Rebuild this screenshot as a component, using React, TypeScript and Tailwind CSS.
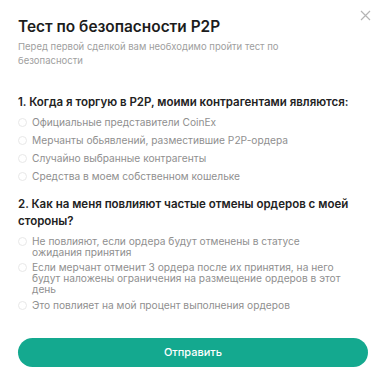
import React, { useState } from 'react';

const QUESTIONS = [
  {
    title: '1. Когда я торгую в P2P, моими контрагентами являются:',
    options: [
      'Официальные представители CoinEx',
      'Мерчанты обьявлений, разместившие P2P-ордера',
      'Случайно выбранные контрагенты',
      'Средства в моем собственном кошельке',
    ],
  },
  {
    title: '2. Как на меня повлияют частые отмены ордеров с моей стороны?',
    options: [
      'Не повлияют, если ордера будут отменены в статусе ожидания принятия',
      'Если мерчант отменит 3 ордера после их принятия, на него будут наложены ограничения на размещение ордеров в этот день',
      'Это повлияет на мой процент выполнения ордеров',
    ],
  },
];

export default function App() {
  const [answers, setAnswers] = useState<Record<number, number>>({});

  return (
    <div
      className="relative w-[386px] h-[380px] bg-white px-[18px] pt-[17px] text-[#1f1f1f]"
      style={{ fontFamily: 'Inter, "Noto Sans", sans-serif' }}
    >
      <button type="button" className="absolute right-[14px] top-[9px] p-[1px] text-[#b5b5b5]">
        <svg width="11" height="11" viewBox="0 0 11 11" fill="none" stroke="currentColor" strokeWidth="1.2">
          <path d="M1 1L10 10M10 1L1 10" />
        </svg>
      </button>

      <h1 className="text-[15.4px] leading-[20px] font-semibold text-[#1c1c1c]">Тест по безопасности P2P</h1>
      <p className="mt-[3px] pr-[60px] text-[9.5px] leading-[14px] text-[#a0a0a0]">
        Перед первой сделкой вам необходимо пройти тест по безопасности
      </p>

      <div className="mt-[26px] flex flex-col gap-[11px]">
        {QUESTIONS.map((q, qi) => (
          <div key={qi}>
            <h2 className="text-[11.5px] leading-[17px] font-semibold text-[#222]">{q.title}</h2>
            <ul className="mt-[6px] pr-[16px] flex flex-col gap-[4.5px]">
              {q.options.map((o, oi) => {
                const active = answers[qi] === oi;
                return (
                  <li
                    key={oi}
                    className="flex items-start gap-[5px] min-h-[13.5px] cursor-pointer"
                    onClick={() => setAnswers((a) => ({ ...a, [qi]: oi }))}
                  >
                    <span
                      className={`mt-[1px] w-[9px] h-[9px] shrink-0 rounded-full border ${
                        active ? 'border-[#14a98f] bg-[#14a98f]' : 'border-[#e8e8e8]'
                      }`}
                    />
                    <span className="text-[10.2px] leading-[11px] text-[#8f8f8f]">{o}</span>
                  </li>
                );
              })}
            </ul>
          </div>
        ))}
      </div>

      <button
        type="button"
        className="mt-[25px] w-full h-[29px] rounded-full bg-[#14a98f] text-white text-[11px] font-medium"
      >
        Отправить
      </button>
    </div>
  );
}
